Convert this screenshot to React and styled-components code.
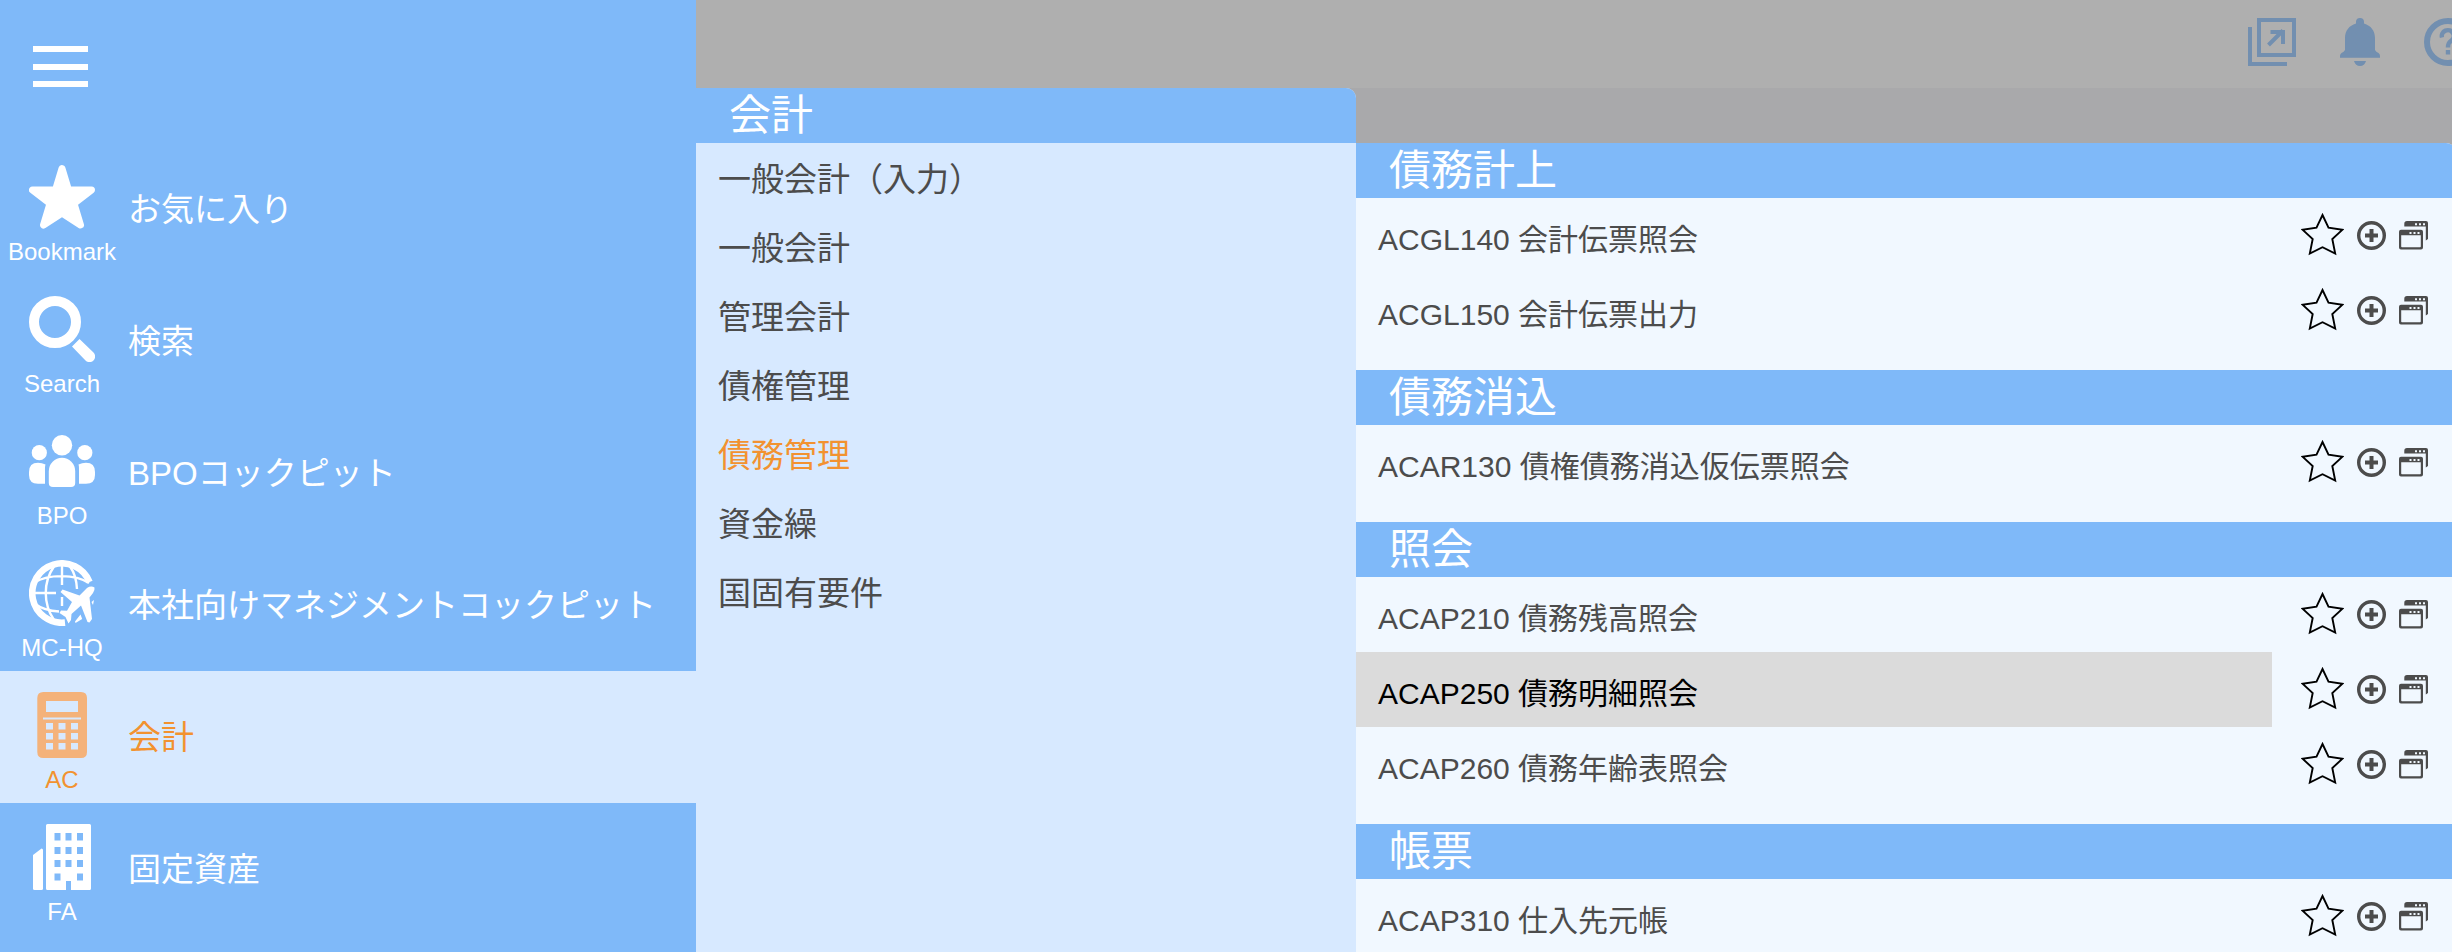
import React, { useState } from 'react';
import styled, { createGlobalStyle } from 'styled-components';

const GlobalStyle = createGlobalStyle`
  :root {
    --blue: #7fb9f9;
    --blue-light: #d7e9ff;
    --blue-pale: #f1f8ff;
    --orange: #f29230;
    --orange-soft: #f4b27a;
    --text: #4c4c4c;
    --veil-icon: #728fb0;
  }

  * {
    box-sizing: border-box;
  }

  body {
    margin: 0;
    color: var(--text);
    font-family: 'Liberation Sans', 'Noto Sans CJK JP', sans-serif;
  }

  button {
    border: none;
    padding: 0;
    background: none;
    font: inherit;
    color: inherit;
    cursor: pointer;
  }

  a {
    color: inherit;
    text-decoration: none;
  }

  ul {
    list-style: none;
    margin: 0;
    padding: 0;
  }

  svg {
    display: block;
    flex: none;
  }
`;

const Page = styled.div`
  display: flex;
  height: 100vh;
  overflow: hidden;
  background: #a9a9ab;
`;

const Sidebar = styled.nav`
  flex: none;
  width: 696px;
  background: var(--blue);
`;

const SidebarTop = styled.div`
  height: 143px;
  padding: 46px 33px;
`;

const MenuButton = styled.button`
  display: flex;
  flex-direction: column;
  justify-content: space-between;
  width: 55px;
  height: 41px;
`;

const MenuBar = styled.span`
  height: 6px;
  background: #fff;
`;

const ModuleButton = styled.button`
  display: flex;
  align-items: center;
  gap: 4px;
  width: 100%;
  height: 132px;
  text-align: left;
  color: ${props => (props.$active ? 'var(--orange)' : '#fff')};
  background: ${props => (props.$active ? 'var(--blue-light)' : 'transparent')};

  svg {
    color: ${props => (props.$active ? 'var(--orange-soft)' : '#fff')};
  }
`;

const ModuleMark = styled.span`
  display: flex;
  flex-direction: column;
  align-items: center;
  gap: 10px;
  width: 124px;
  padding-top: 10px;
`;

const ModuleCode = styled.span`
  font-size: 24px;
  line-height: 24px;
`;

const ModuleLabel = styled.span`
  padding-top: 1px;
  font-size: 33px;
  line-height: 48px;
`;

const Content = styled.div`
  flex: 1;
  display: flex;
  flex-direction: column;
  min-width: 0;
`;

const TopBar = styled.header`
  display: flex;
  flex: none;
  justify-content: flex-end;
  gap: 40px;
  height: 88px;
  margin-right: -20px;
  padding-top: 18px;
  background: #afafaf;
  color: var(--veil-icon);
`;

const TopButton = styled.button`
  width: 48px;
  height: 48px;
`;

const Panels = styled.div`
  display: flex;
  flex: 1;
  min-height: 0;
`;

const CategoryPanel = styled.nav`
  flex: none;
  width: 660px;
  background: var(--blue-light);
  border-top-right-radius: 10px;
  overflow: hidden;
`;

const PanelTitle = styled.h2`
  margin: 0;
  height: 55px;
  padding-left: 33px;
  font-size: 42px;
  font-weight: 400;
  line-height: 55px;
  color: #fff;
  background: var(--blue);
`;

const CategoryList = styled.ul`
  padding-top: 2px;
`;

const CategoryLink = styled.a`
  display: block;
  padding-left: 22px;
  font-size: 33px;
  line-height: 69px;
  color: ${props => (props.$active ? 'var(--orange)' : 'inherit')};
`;

const ProgramPanel = styled.main`
  flex: 1;
  min-width: 0;
  margin-top: 55px;
  margin-right: -4px;
  border-top-right-radius: 10px;
  overflow: hidden;
  background: var(--blue-pale);
`;

const ProgramList = styled.ul`
  padding-bottom: 22px;
`;

const ProgramRow = styled.li`
  display: flex;
  align-items: center;
  height: 75px;
`;

const ProgramLink = styled.a`
  flex: 1;
  height: 75px;
  padding: 9px 22px 0;
  font-size: 30px;
  line-height: 66px;
  color: ${props => (props.$active ? '#000' : 'inherit')};
  background: ${props => (props.$active ? '#dbdbdb' : 'transparent')};
`;

const Actions = styled.div`
  display: flex;
  align-items: center;
  gap: 13px;
  padding: 0 28px 0 29px;
`;

const BookmarkIcon = () => (
  <svg width="66" height="66" viewBox="0 0 66 66" fill="currentColor">
    <path
      d="M33 4.5 39.5 26 62.5 26 45 39.5 51.5 61 33 49 14.5 61 21 39.5 3.5 26 26.5 26Z"
      stroke="currentColor"
      strokeWidth="7"
      strokeLinejoin="round"
    />
  </svg>
);

const SearchIcon = () => (
  <svg width="66" height="66" viewBox="0 0 66 66" fill="currentColor">
    <circle cx="26" cy="26" r="21" fill="none" stroke="currentColor" strokeWidth="10" />
    <path d="M50.5 43 64.5 56.5A5.6 5.6 0 0 1 56.5 64.5L43 50.5Z" />
  </svg>
);

const PeopleIcon = () => (
  <svg width="66" height="66" viewBox="0 0 66 66" fill="currentColor">
    <circle cx="33" cy="17.2" r="10.2" />
    <circle cx="10.3" cy="24.7" r="7.6" />
    <circle cx="55.8" cy="24.7" r="7.6" />
    <path d="M19.8 43A13.2 13.2 0 0 1 46.2 43V55Q46.2 59 42 59H24Q19.8 59 19.8 55Z" />
    <path d="M16.5 36.5C15.8 38.5 16 41 16 44V55.7H9Q0 55.7 0 47V44Q0 34.7 9 34.7 13 34.7 16.5 36.5Z" />
    <path d="M49.5 36.5C50.2 38.5 50 41 50 44V55.7H57Q66 55.7 66 47V44Q66 34.7 57 34.7 53 34.7 49.5 36.5Z" />
  </svg>
);

const GlobeIcon = () => (
  <svg width="66" height="66" viewBox="0 0 66 66" fill="none" stroke="currentColor">
    <path d="M60.5 22A29.7 29.7 0 1 0 36 62.6" strokeWidth="6.6" />
    <path
      d="M33 6V25M33 37V46M6 33H27M25 6.5C14 22 14 44 25 60M41 6.5C45 12 47.5 20 48 29M6 22C20 14 46 14 60 23M6 44C13 49 21 51 30 51.5"
      strokeWidth="2.4"
    />
    <path
      d="M65.5 27.5Q66 30 64 33L60.5 37.5 63 59 60.5 62.5 58.5 62 52 45.5 42.5 54 42 60 39.5 63.5 36.5 57 30.5 53 32 50.5 38 50.8 43 42 31.5 32 33.5 29.5 50.5 35.5 58 28Q62 25.5 65.5 27.5Z"
      fill="currentColor"
      stroke="none"
    />
    <path d="M62.5 42 65 40 64 45ZM46 61.5 51.5 54.5 53.2 59 46.5 63Z" fill="currentColor" stroke="none" />
  </svg>
);

const CalculatorIcon = () => (
  <svg width="66" height="66" viewBox="0 0 66 66" fill="currentColor" fillRule="evenodd">
    <path d="M14.3 0H52Q58 0 58 6V60Q58 66 52 66H14.3Q8.3 66 8.3 60V6Q8.3 0 14.3 0ZM17 9V20H49V9ZM14 25.5V27.5H52V25.5ZM17 31V37.5H24V31ZM29.5 31V37.5H36.5V31ZM42 31V37.5H49V31ZM17 41V47.5H24V41ZM29.5 41V47.5H36.5V41ZM42 41V47.5H49V41ZM17 51V57.5H24V51ZM29.5 51V57.5H36.5V51ZM42 51V57.5H49V51Z" />
  </svg>
);

const BuildingIcon = () => (
  <svg width="66" height="66" viewBox="0 0 66 66" fill="currentColor" fillRule="evenodd">
    <path d="M18.5 0H60.5Q62 0 62 1.5V64.5Q62 66 60.5 66H42V57H37V66H18.5Q17 66 17 64.5V1.5Q17 0 18.5 0ZM25.5 9V16.5H31.5V9ZM36.5 9V16.5H42.5V9ZM48 9V16.5H54V9ZM25.5 23V30H31.5V23ZM36.5 23V30H42.5V23ZM48 23V30H54V23ZM25.5 36V43H31.5V36ZM36.5 36V43H42.5V36ZM48 36V43H54V36ZM25.5 49.5V56.5H31.5V49.5ZM48 49.5V56.5H54V49.5Z" />
    <path d="M4 31 12.5 24.5Q14 24.5 14 26V64.5Q14 66 12.5 66H5.5Q4 66 4 64.5Z" />
  </svg>
);

const NewWindowIcon = () => (
  <svg width="48" height="48" viewBox="0 0 48 48" fill="none" stroke="currentColor" strokeWidth="4">
    <path d="M11 2H46V37H11ZM2 9V46H39M20.5 27 35 12.5M22.5 14H35V26" />
  </svg>
);

const BellIcon = () => (
  <svg width="48" height="48" viewBox="0 0 48 48" fill="currentColor">
    <path d="M24 0A4 4 0 0 1 28 4V5.5C35 7.5 39 13 39 20V32Q40 34 42.5 35 44 36 44 38V39.7H4V38Q4 36 5.5 35 8 34 9 32V20C9 13 13 7.5 20 5.5V4A4 4 0 0 1 24 0ZM18 43H30C29 46.5 27 48 24 48S19 46.5 18 43Z" />
  </svg>
);

const HelpIcon = () => (
  <svg width="48" height="48" viewBox="0 0 48 48" fill="none" stroke="currentColor">
    <circle cx="24" cy="24" r="21" strokeWidth="6" />
    <path d="M18 19.5A6 5.8 0 1 1 27.5 22.5C25 24.5 24 25.5 24 29.5M24 32V36.5" strokeWidth="4.4" />
  </svg>
);

const StarIcon = () => (
  <svg width="43" height="46" viewBox="0 0 43 46" fill="none" stroke="#000" strokeWidth="1.9">
    <path d="M21.5 2 27.5 14.7 41.5 16.7 31.3 26 34.2 40.5 21.5 34.2 8.8 40.5 11.7 26 1.5 16.7 15.5 14.7Z" />
  </svg>
);

const AddIcon = () => (
  <svg width="29" height="29" viewBox="0 0 29 29" fill="none" stroke="#4c4c4c">
    <circle cx="14.5" cy="14.5" r="12.8" strokeWidth="3.4" />
    <path d="M8 14.5H21M14.5 8V21" strokeWidth="4" />
  </svg>
);

const WindowsIcon = () => (
  <svg width="29" height="29" viewBox="0 0 29 29" fill="#4c4c4c" fillRule="evenodd">
    <path d="M8 0H27Q29 0 29 2V18L26.8 19.5V5.5H5.3V2.7Q5.3 0 8 0ZM16 2.3V4.3H18V2.3ZM20 2.3V4.3H22V2.3ZM24 2.3V4.3H26V2.3Z" />
    <path d="M2 8.8H22Q24 8.8 24 10.8V26.5Q24 28.5 22 28.5H2Q0 28.5 0 26.5V10.8Q0 8.8 2 8.8ZM10.5 11V13H12.5V11ZM14.5 11V13H16.5V11ZM18.5 11V13H20.5V11ZM2.2 14.3V25.6Q2.2 26.3 3 26.3H21Q21.8 26.3 21.8 25.6V14.3Z" />
  </svg>
);

const modules = [
  { code: 'Bookmark', label: 'お気に入り', Icon: BookmarkIcon },
  { code: 'Search', label: '検索', Icon: SearchIcon },
  { code: 'BPO', label: 'BPOコックピット', Icon: PeopleIcon },
  { code: 'MC-HQ', label: '本社向けマネジメントコックピット', Icon: GlobeIcon },
  { code: 'AC', label: '会計', Icon: CalculatorIcon },
  { code: 'FA', label: '固定資産', Icon: BuildingIcon }
];

const categories = [
  '一般会計（入力）',
  '一般会計',
  '管理会計',
  '債権管理',
  '債務管理',
  '資金繰',
  '国固有要件'
];

const sections = [
  {
    title: '債務計上',
    programs: [
      { id: 'ACGL140', name: '会計伝票照会' },
      { id: 'ACGL150', name: '会計伝票出力' }
    ]
  },
  {
    title: '債務消込',
    programs: [{ id: 'ACAR130', name: '債権債務消込仮伝票照会' }]
  },
  {
    title: '照会',
    programs: [
      { id: 'ACAP210', name: '債務残高照会' },
      { id: 'ACAP250', name: '債務明細照会' },
      { id: 'ACAP260', name: '債務年齢表照会' }
    ]
  },
  {
    title: '帳票',
    programs: [{ id: 'ACAP310', name: '仕入先元帳' }]
  }
];

const App = () => {
  const [activeModule, setActiveModule] = useState('AC');
  const [activeCategory, setActiveCategory] = useState('債務管理');
  const [activeProgram, setActiveProgram] = useState('ACAP250');

  return (
    <>
      <GlobalStyle />
      <Page lang="ja">
        <Sidebar>
          <SidebarTop>
            <MenuButton type="button" aria-label="メニュー">
              <MenuBar />
              <MenuBar />
              <MenuBar />
            </MenuButton>
          </SidebarTop>
          {modules.map(({ code, label, Icon }) => (
            <ModuleButton
              key={code}
              type="button"
              $active={activeModule === code}
              onClick={() => setActiveModule(code)}
            >
              <ModuleMark>
                <Icon />
                <ModuleCode>{code}</ModuleCode>
              </ModuleMark>
              <ModuleLabel>{label}</ModuleLabel>
            </ModuleButton>
          ))}
        </Sidebar>

        <Content>
          <TopBar>
            <TopButton type="button" aria-label="別ウィンドウ">
              <NewWindowIcon />
            </TopButton>
            <TopButton type="button" aria-label="通知">
              <BellIcon />
            </TopButton>
            <TopButton type="button" aria-label="ヘルプ">
              <HelpIcon />
            </TopButton>
          </TopBar>

          <Panels>
            <CategoryPanel>
              <PanelTitle>会計</PanelTitle>
              <CategoryList>
                {categories.map(name => (
                  <li key={name}>
                    <CategoryLink
                      href="#"
                      $active={activeCategory === name}
                      onClick={() => setActiveCategory(name)}
                    >
                      {name}
                    </CategoryLink>
                  </li>
                ))}
              </CategoryList>
            </CategoryPanel>

            <ProgramPanel>
              {sections.map(section => (
                <section key={section.title}>
                  <PanelTitle>{section.title}</PanelTitle>
                  <ProgramList>
                    {section.programs.map(program => (
                      <ProgramRow key={program.id}>
                        <ProgramLink
                          href="#"
                          $active={activeProgram === program.id}
                          onMouseEnter={() => setActiveProgram(program.id)}
                        >
                          {program.id} {program.name}
                        </ProgramLink>
                        <Actions>
                          <button type="button" aria-label="お気に入りに追加">
                            <StarIcon />
                          </button>
                          <button type="button" aria-label="追加">
                            <AddIcon />
                          </button>
                          <button type="button" aria-label="新しいウィンドウで開く">
                            <WindowsIcon />
                          </button>
                        </Actions>
                      </ProgramRow>
                    ))}
                  </ProgramList>
                </section>
              ))}
            </ProgramPanel>
          </Panels>
        </Content>
      </Page>
    </>
  );
};

export default App;
